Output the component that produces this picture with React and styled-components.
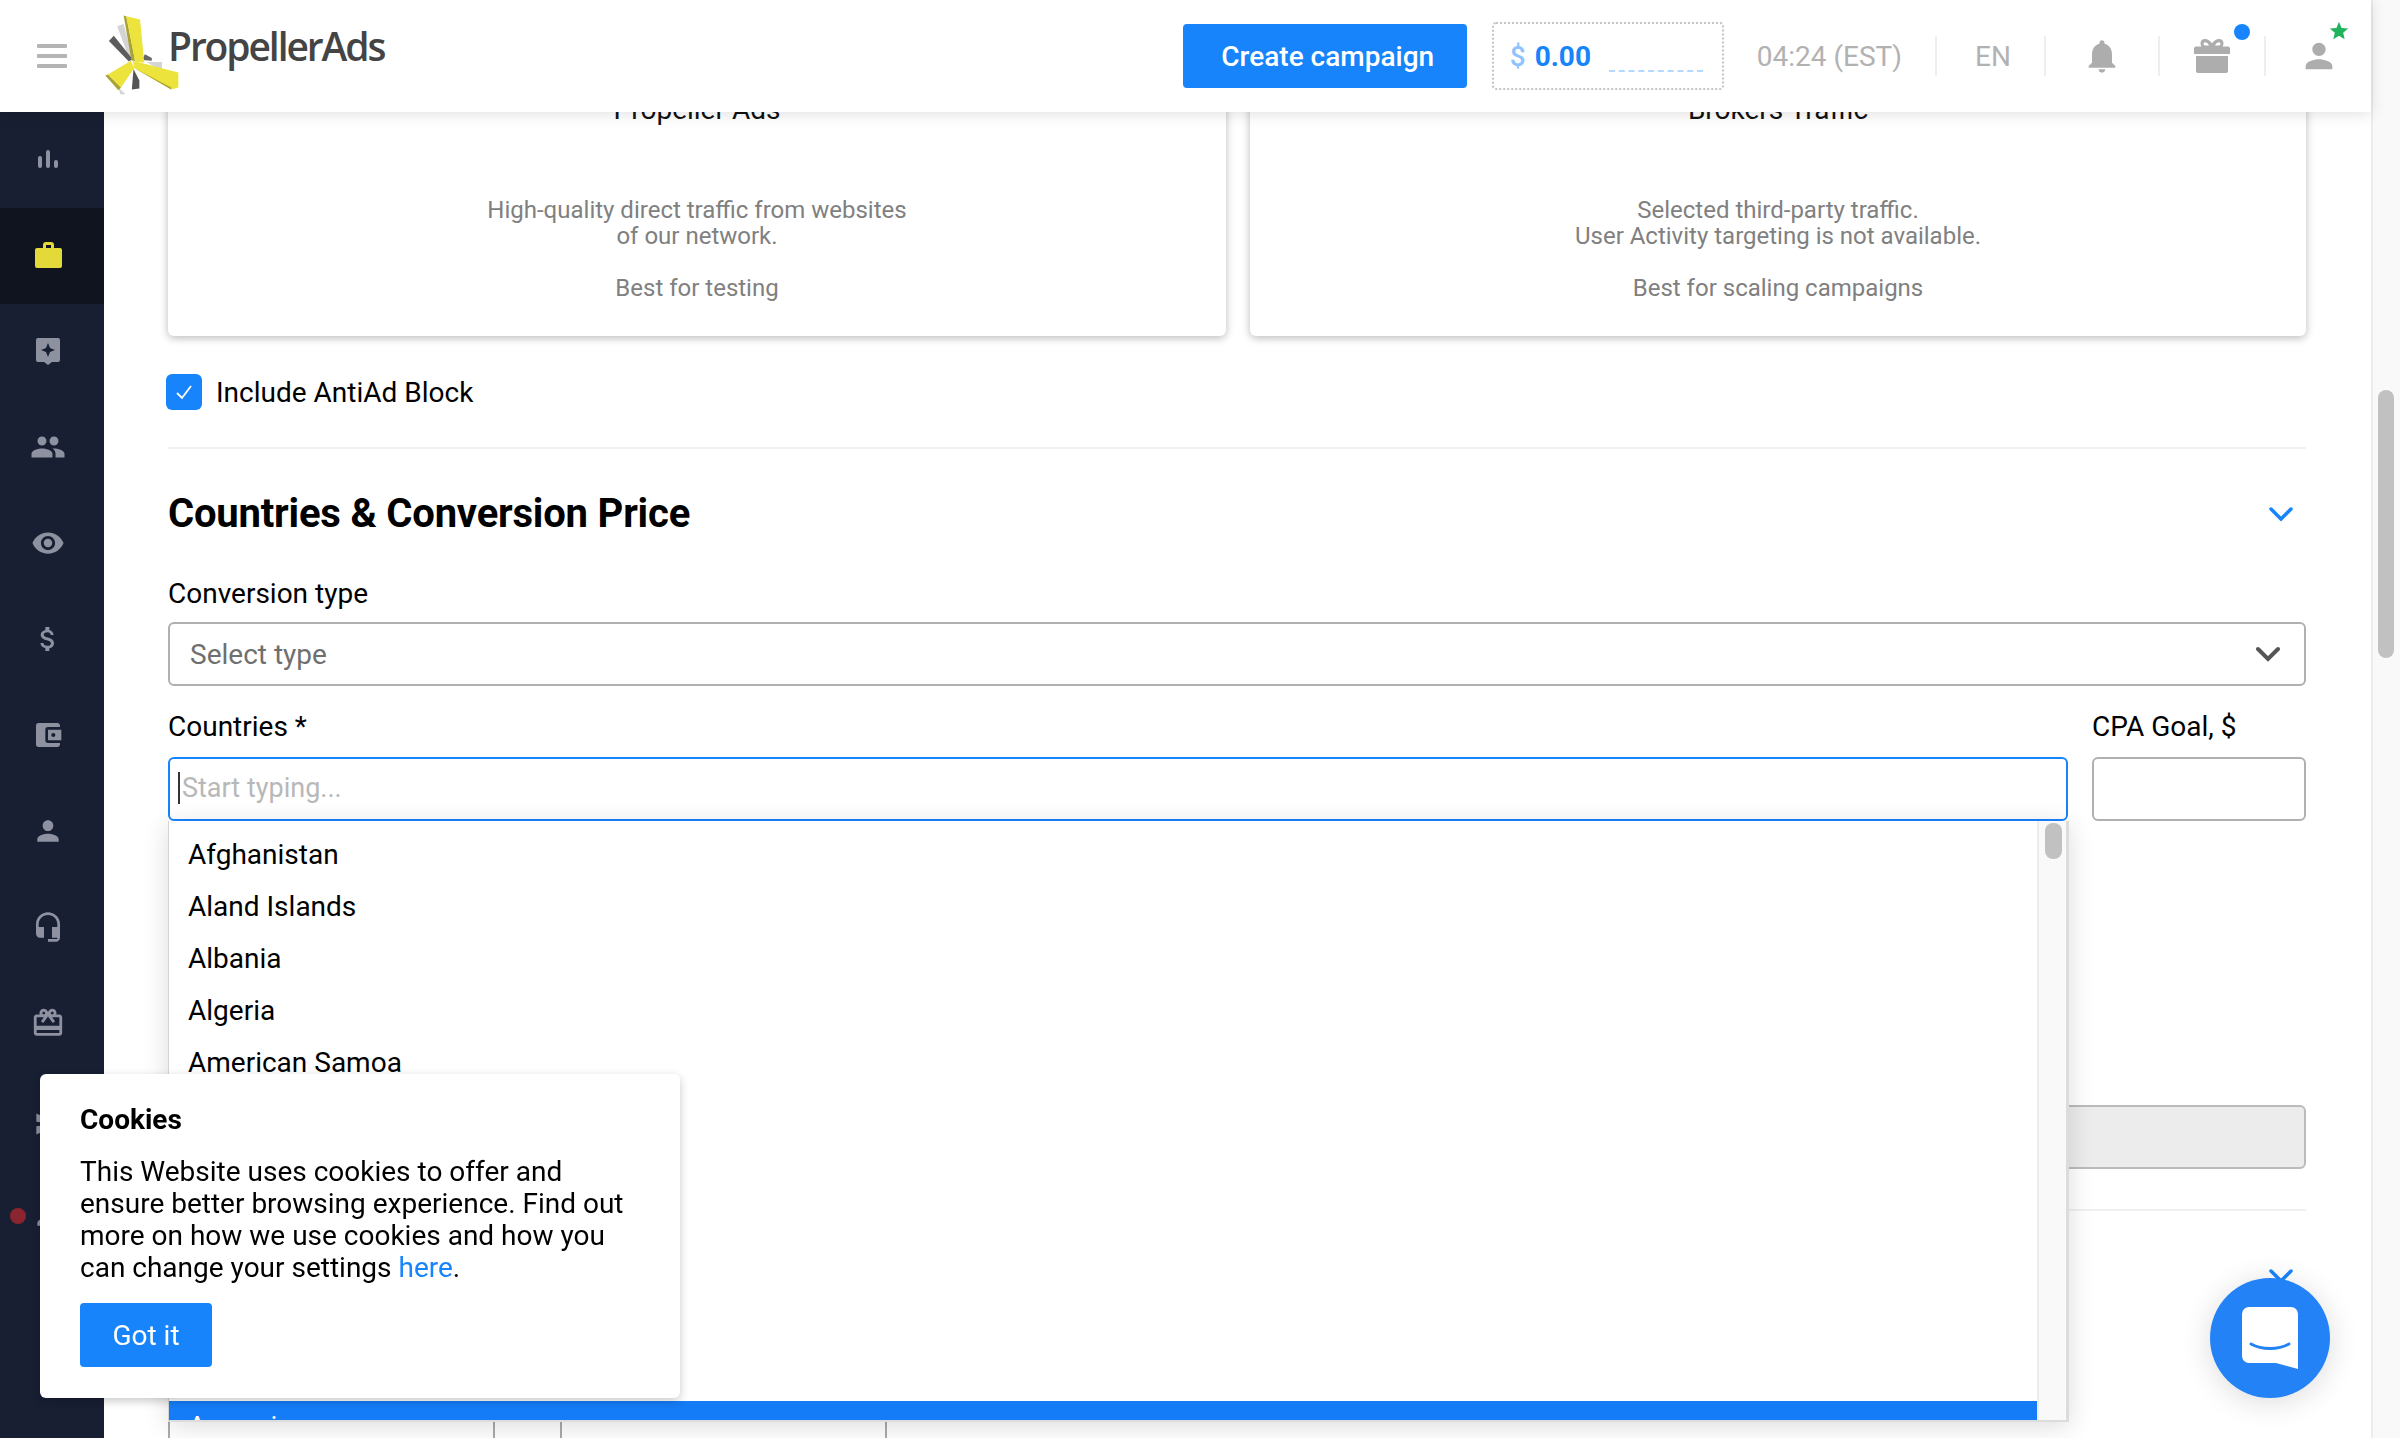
import React from 'react'
import styled, { createGlobalStyle } from 'styled-components'
import {
  MdPeople, MdVisibility, MdAttachMoney, MdAccountBalanceWallet, MdPerson,
  MdHeadsetMic, MdCardGiftcard, MdNotifications, MdSend, MdStar,
} from 'react-icons/md'

const BLUE = '#1784fc'

const Global = createGlobalStyle`
  html, body { margin: 0; padding: 0; height: 100%; overflow: hidden; background: #fff; }
  body { font-family: Roboto, "Liberation Sans", sans-serif; color: #000; }
  * { box-sizing: border-box; }
`

const Page = styled.div`
  display: grid;
  grid-template-columns: 1fr 29px;
  width: 2400px;
  height: 1438px;
  overflow: hidden;
`

const Frame = styled.div`
  display: flex;
  flex-direction: column;
  min-width: 0;
  height: 1438px;
`

const PageTrack = styled.div`
  background: #f9f9f9;
  border-left: 2px solid #ececec;
  padding: 390px 6px 0 5px;
`

const PageThumb = styled.div`
  height: 268px;
  background: #c1c1c1;
  border-radius: 8px;
`

/* header */
const Header = styled.header`
  position: relative;
  z-index: 5;
  flex: 0 0 112px;
  display: flex;
  align-items: center;
  background: #fff;
  box-shadow: 0 2px 14px rgba(0, 0, 0, 0.12);
  padding-left: 37px;
`

const Burger = styled.div`
  display: flex;
  flex-direction: column;
  gap: 6px;
  width: 30px;
  margin-right: 37px;
  span { height: 4px; background: #b4b4b4; border-radius: 1px; }
`

const Logo = styled.div`
  display: flex;
  align-items: flex-start;
  width: 278px;
  height: 82px;
  margin-top: -2px;
  svg { flex: none; width: 76px; height: 82px; }
`

const LogoText = styled.span`
  font-family: "Open Sans", sans-serif;
  font-size: 39px;
  font-weight: 600;
  line-height: 50px;
  letter-spacing: -2.1px;
  color: #444;
  margin: 7px 0 0 -12px;
`

const HeaderRight = styled.div`
  margin-left: auto;
  display: flex;
  align-items: center;
  height: 100%;
`

const CreateButton = styled.button`
  width: 284px;
  height: 64px;
  border: 0;
  border-radius: 4px;
  background: ${BLUE};
  color: #fff;
  font: 500 28px Roboto, sans-serif;
  margin-right: 25px;
  padding: 0 0 0 6px;
`

const Balance = styled.div`
  display: flex;
  align-items: center;
  width: 232px;
  height: 68px;
  border: 2px dotted #c4c4c4;
  border-radius: 4px;
  padding-left: 16px;
  font: 700 28px Roboto, sans-serif;
  color: ${BLUE};
  margin-right: 33px;
  b { color: #8fc3ff; font-weight: 500; margin-right: 9px; }
  i {
    width: 94px;
    height: 0;
    margin: 30px 0 0 18px;
    border-top: 2px dashed #b5d8ff;
  }
`

const HeaderText = styled.span`
  font-size: 28px;
  color: #b2b2b2;
  white-space: nowrap;
`

const Cell = styled.div`
  position: relative;
  display: flex;
  align-items: center;
  justify-content: center;
  width: ${p => p.$w}px;
  height: 40px;
  color: #adadad;
  border-left: ${p => (p.$line ? '2px solid #eeeeee' : '0')};
  padding-left: ${p => p.$pad || 0}px;
`

const Dot = styled.span`
  position: absolute;
  top: -12px;
  right: 14px;
  width: 16px;
  height: 16px;
  border-radius: 50%;
  background: ${BLUE};
`

const GreenStar = styled(MdStar)`
  position: absolute;
  top: -16px;
  right: 21px;
  color: #1fb45c;
`

/* sidebar + content */
const Body = styled.div`
  flex: 1;
  display: flex;
  min-height: 0;
`

const Sidebar = styled.nav`
  flex: 0 0 104px;
  display: flex;
  flex-direction: column;
  background: #181f33;
`

const SideItem = styled.div`
  position: relative;
  flex: 0 0 96px;
  display: flex;
  align-items: center;
  justify-content: center;
  padding: 0 8px 2px 0;
  background: ${p => (p.$active ? '#10141f' : 'transparent')};
  color: ${p => (p.$active ? '#e3da3a' : '#8d91a0')};
`

const RedDot = styled.span`
  position: absolute;
  left: 10px;
  top: 40px;
  width: 16px;
  height: 16px;
  border-radius: 50%;
  background: #8a2530;
`

const SendIcon = styled(MdSend)`
  margin-top: 10px;
`

const Main = styled.main`
  flex: 1;
  min-width: 0;
  overflow: hidden;
  padding: 0 65px 0 64px;
`

const Cards = styled.div`
  display: grid;
  grid-template-columns: 1058px 1056px;
  gap: 24px;
  margin-top: -100px;
`

const Card = styled.div`
  height: 324px;
  background: #fff;
  border-radius: 6px;
  box-shadow: 0 2px 8px rgba(0, 0, 0, 0.28);
  padding-top: 80px;
  text-align: center;
  color: #808080;
  font-size: 24px;
  line-height: 26px;
`

const CardTitle = styled.div`
  font-size: 28px;
  line-height: 36px;
  color: #111;
  margin-bottom: 69px;
`

const CardNote = styled.div`
  margin-top: 26px;
`

const CheckRow = styled.label`
  display: flex;
  align-items: center;
  gap: 14px;
  height: 36px;
  margin: 38px 0 0 -2px;
  font-size: 28px;
`

const CheckBox = styled.span`
  display: flex;
  align-items: center;
  justify-content: center;
  width: 36px;
  height: 36px;
  border-radius: 6px;
  background: ${BLUE};
`

const Divider = styled.div`
  height: 2px;
  background: #f0f0f0;
  margin-top: ${p => p.$top}px;
`

const SectionHead = styled.div`
  display: flex;
  align-items: center;
  justify-content: space-between;
  height: 60px;
  margin-top: 35px;
  padding-right: 13px;
`

const SectionTitle = styled.h2`
  margin: 0;
  font-size: 40px;
  font-weight: 700;
  line-height: 60px;
  letter-spacing: -0.2px;
  color: #000;
`

const Label = styled.div`
  font-size: 28px;
  line-height: 32px;
  margin-top: ${p => p.$top || 0}px;
  margin-bottom: ${p => p.$bottom || 14}px;
`

const SelectBox = styled.div`
  display: flex;
  align-items: center;
  justify-content: space-between;
  height: 64px;
  border: 2px solid #b0b0b0;
  border-radius: 6px;
  padding: 0 24px 0 20px;
  font-size: 28px;
  color: #6f6f6f;
`

const FieldRow = styled.div`
  display: grid;
  grid-template-columns: 1900px 214px;
  gap: 24px;
  margin-top: 25px;
`

const Field = styled.div`
  position: relative;
  z-index: ${p => p.$z || 0};
`

const TextBox = styled.div`
  display: flex;
  align-items: center;
  height: 64px;
  border: 2px solid ${p => (p.$focus ? BLUE : '#b0b0b0')};
  border-radius: 6px;
  padding: 0 0 2px 8px;
  font-size: 27px;
  color: #b8b8b8;
  background: #fff;
`

const Caret = styled.span`
  width: 2px;
  height: 32px;
  background: #333;
  margin-right: 2px;
`

const Dropdown = styled.div`
  position: absolute;
  top: 100%;
  left: 0;
  right: -1px;
  height: 601px;
  display: flex;
  background: #fff;
  border-left: 1px solid #d4d4d4;
  border-right: 3px solid #dcdcdc;
  border-bottom: 2px solid #dcdcdc;
  box-shadow: 0 4px 24px rgba(0, 0, 0, 0.14);
  overflow: hidden;
`

const CountryList = styled.ul`
  flex: 1;
  list-style: none;
  margin: 0;
  padding: 8px 0 0;
  overflow: hidden;
`

const Country = styled.li`
  height: 52px;
  line-height: 52px;
  padding-left: 19px;
  font-size: 28px;
  color: ${p => (p.$active ? '#fff' : '#000')};
  background: ${p => (p.$active ? '#147cf6' : 'transparent')};
`

const ListTrack = styled.div`
  flex: 0 0 29px;
  background: #f9f9f9;
  border-left: 2px solid #ececec;
  padding: 2px 4px 0 6px;
`

const ListThumb = styled.div`
  height: 36px;
  background: #c1c1c1;
  border-radius: 8px;
`

const DisabledBox = styled.div`
  height: 64px;
  margin-top: 284px;
  background: #ececec;
  border: 2px solid #bbb;
  border-radius: 6px;
`

const LowerBoxes = styled.div`
  display: flex;
  gap: 65px;
  margin-top: 30px;
`

const LowerBox = styled.div`
  width: 327px;
  height: 200px;
  border: 2px solid #aaa;
  border-radius: 6px;
`

const Cookie = styled.aside`
  position: fixed;
  z-index: 8;
  left: 40px;
  top: 1074px;
  width: 640px;
  height: 324px;
  background: #fff;
  border-radius: 6px;
  box-shadow: 0 3px 10px rgba(0, 0, 0, 0.22);
  padding: 28px 40px 0;
`

const CookieTitle = styled.div`
  font-size: 28px;
  font-weight: 700;
  line-height: 36px;
`

const CookieText = styled.p`
  margin: 18px 0 19px;
  font-size: 28px;
  line-height: 32px;
  a { color: ${BLUE}; }
`

const GotIt = styled.button`
  width: 132px;
  height: 64px;
  border: 0;
  border-radius: 4px;
  background: ${BLUE};
  color: #fff;
  font: 400 28px Roboto, sans-serif;
`

const Chat = styled.div`
  position: fixed;
  z-index: 9;
  left: 2210px;
  top: 1278px;
  width: 120px;
  height: 120px;
  border-radius: 50%;
  background: #2382f6;
  box-shadow: 0 4px 30px rgba(0, 0, 0, 0.14);
  display: flex;
  align-items: center;
  justify-content: center;
`

const Chevron = ({ color = BLUE, w = 3.5 }) => (
  <svg width="24" height="16" viewBox="0 0 24 16">
    <polyline points="2,3 12,13 22,3" fill="none" stroke={color} strokeWidth={w} strokeLinecap="round" />
  </svg>
)

const PropellerMark = () => (
  <svg viewBox="40 40 232 245">
    <polygon points="80,75 100,68 128,175 112,160" fill="#d4d4d4" />
    <polygon points="55,120 70,104 127,175 116,182" fill="#5c5c5c" />
    <polygon points="155,178 165,160 186,172 186,180" fill="#666" />
    <polygon points="170,184 217,184 217,212" fill="#d4d4d4" />
    <polygon points="125,268 130,205 148,240 148,265" fill="#555" />
    <polygon points="84,262 106,282 90,282" fill="#d4d4d4" />
    <polygon points="100,42 108,44 135,180 124,180" fill="#a9a335" />
    <polygon points="108,44 150,54 163,186 135,182" fill="#ece33c" />
    <polygon points="44,225 52,222 92,262 84,270" fill="#a9a335" />
    <polygon points="52,222 122,180 132,202 92,262" fill="#ece33c" />
    <polygon points="128,180 267,216 267,262 245,268 132,202" fill="#ece33c" />
    <polygon points="132,202 245,262 245,268" fill="#a9a335" />
  </svg>
)

const Bars = () => (
  <svg width="20" height="18" viewBox="0 0 20 18" fill="currentColor">
    <rect x="0" y="6" width="4" height="12" rx="2" />
    <rect x="8" y="0" width="4" height="18" rx="2" />
    <rect x="16" y="10" width="4" height="8" rx="2" />
  </svg>
)

const Bag = () => (
  <svg width="27" height="26" viewBox="0 0 27 26" fill="currentColor">
    <path fillRule="evenodd" d="M8 6V3a3 3 0 0 1 3-3h5a3 3 0 0 1 3 3v3h6a2 2 0 0 1 2 2v16a2 2 0 0 1-2 2H2a2 2 0 0 1-2-2V8a2 2 0 0 1 2-2zm3 0h5V3h-5z" />
  </svg>
)

const StarTag = () => (
  <svg width="24" height="27" viewBox="0 0 24 27" fill="currentColor">
    <path fillRule="evenodd" d="M2 0h20a2 2 0 0 1 2 2v20a2 2 0 0 1-2 2h-6l-4 3-4-3H2a2 2 0 0 1-2-2V2a2 2 0 0 1 2-2zm10 5-2 5-5 2 5 2 2 5 2-5 5-2-5-2z" />
  </svg>
)

const Gift = () => (
  <svg width="36" height="34" viewBox="0 0 36 32" preserveAspectRatio="none" fill="currentColor">
    <path fillRule="evenodd" d="M11 0c3 0 5 1.500 7 4 2-2.500 4-4 7-4 3 0 4.500 2 4.500 4.200 0 1-.3 2-.9 2.800H34a2 2 0 0 1 2 2v5H0V9a2 2 0 0 1 2-2h5.400a4.700 4.700 0 0 1-.9-2.800C6.500 2 8 0 11 0zm0 3a1.500 1.500 0 0 0 0 3h4c-1-2-2.500-3-4-3zm14 0c-1.500 0-3 1-4 3h4a1.500 1.500 0 0 0 0-3z" />
    <path d="M2 16h32v14a2 2 0 0 1-2 2H4a2 2 0 0 1-2-2z" />
  </svg>
)

const navItems = [
  { icon: <Bars /> },
  { icon: <Bag />, active: true },
  { icon: <StarTag /> },
  { icon: <MdPeople size={36} /> },
  { icon: <MdVisibility size={34} /> },
  { icon: <MdAttachMoney size={32} /> },
  { icon: <MdAccountBalanceWallet size={32} /> },
  { icon: <MdPerson size={32} /> },
  { icon: <MdHeadsetMic size={32} /> },
  { icon: <MdCardGiftcard size={34} /> },
  { icon: <SendIcon size={28} /> },
  { icon: <MdPerson size={32} />, dot: true },
]

const countries = [
  'Afghanistan', 'Aland Islands', 'Albania', 'Algeria', 'American Samoa', 'Andorra',
  'Angola', 'Anguilla', 'Antarctica', 'Antigua and Barbuda', 'Argentina', 'Armenia',
]

export default function App() {
  return (
    <Page>
      <Global />
      <Frame>
        <Header>
          <Burger><span /><span /><span /></Burger>
          <Logo>
            <PropellerMark />
            <LogoText>PropellerAds</LogoText>
          </Logo>
          <HeaderRight>
            <CreateButton>Create campaign</CreateButton>
            <Balance><b>$</b>0.00<i /></Balance>
            <HeaderText>04:24 (EST)</HeaderText>
            <Cell $w={33} />
            <Cell $w={109} $line $pad={5}><HeaderText>EN</HeaderText></Cell>
            <Cell $w={114} $line><MdNotifications size={40} /></Cell>
            <Cell $w={106} $line><Gift /><Dot /></Cell>
            <Cell $w={107} $line><MdPerson size={40} /><GreenStar size={22} /></Cell>
          </HeaderRight>
        </Header>
        <Body>
          <Sidebar>
            {navItems.map((item, i) => (
              <SideItem key={i} $active={item.active}>
                {item.dot && <RedDot />}
                {item.icon}
              </SideItem>
            ))}
          </Sidebar>
          <Main>
            <Cards>
              <Card>
                <CardTitle>Propeller Ads</CardTitle>
                <div>High-quality direct traffic from websites<br />of our network.</div>
                <CardNote>Best for testing</CardNote>
              </Card>
              <Card>
                <CardTitle>Brokers Traffic</CardTitle>
                <div>Selected third-party traffic.<br />User Activity targeting is not available.</div>
                <CardNote>Best for scaling campaigns</CardNote>
              </Card>
            </Cards>

            <CheckRow>
              <CheckBox>
                <svg width="18" height="18" viewBox="0 0 18 18">
                  <polyline points="2,10 7,15 16,3" fill="none" stroke="#fff" strokeWidth="1.8" />
                </svg>
              </CheckBox>
              Include AntiAd Block
            </CheckRow>
            <Divider $top={37} />

            <SectionHead>
              <SectionTitle>Countries &amp; Conversion Price</SectionTitle>
              <Chevron />
            </SectionHead>
            <Label $top={34} $bottom={12}>Conversion type</Label>
            <SelectBox>Select type<Chevron color="#555" w={4} /></SelectBox>

            <FieldRow>
              <Field $z={2}>
                <Label>Countries *</Label>
                <TextBox $focus><Caret />Start typing...</TextBox>
                <Dropdown>
                  <CountryList>
                    {countries.map(name => (
                      <Country key={name} $active={name === 'Armenia'}>{name}</Country>
                    ))}
                  </CountryList>
                  <ListTrack><ListThumb /></ListTrack>
                </Dropdown>
              </Field>
              <Field>
                <Label>CPA Goal, $</Label>
                <TextBox />
              </Field>
            </FieldRow>

            <DisabledBox />
            <Divider $top={40} />
            <SectionHead>
              <span />
              <Chevron />
            </SectionHead>
            <LowerBoxes>
              <LowerBox />
              <LowerBox />
            </LowerBoxes>
          </Main>
        </Body>
      </Frame>
      <PageTrack><PageThumb /></PageTrack>

      <Cookie>
        <CookieTitle>Cookies</CookieTitle>
        <CookieText>
          This Website uses cookies to offer and ensure better browsing experience. Find out more on how we use cookies and how you can change your settings <a>here</a>.
        </CookieText>
        <GotIt>Got it</GotIt>
      </Cookie>

      <Chat>
        <svg width="58" height="64" viewBox="0 0 58 64">
          <path d="M8 1h42a7 7 0 0 1 7 7v55l-22-6H8a7 7 0 0 1-7-7V8a7 7 0 0 1 7-7z" fill="#fff" />
          <path d="M10 38c11 6 27 6 38 0" fill="none" stroke="#2382f6" strokeWidth="3" strokeLinecap="round" />
        </svg>
      </Chat>
    </Page>
  )
}
